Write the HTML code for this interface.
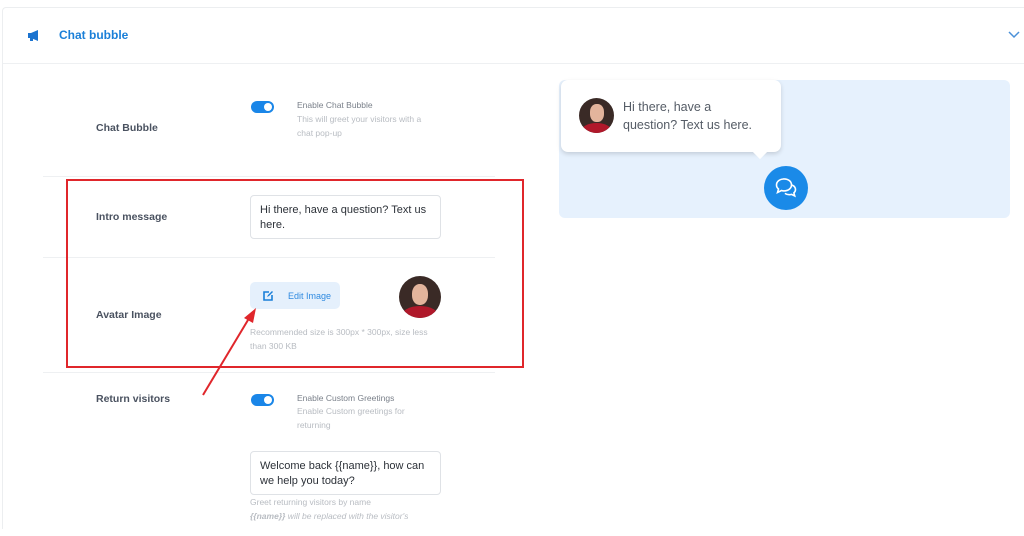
<!DOCTYPE html>
<html style="overflow:hidden;height:536px"><head><meta charset="utf-8"><style>
html,body{margin:0;width:1024px;height:536px;overflow:hidden}
body{background:#fff;font-family:"Liberation Sans",sans-serif;position:relative}
.a{position:absolute}
.lbl{font-size:10.5px;font-weight:bold;color:#4a5260}
.sep{position:absolute;height:1px;background:#eef0f2}
.tog{position:absolute;width:23px;height:12px;border-radius:6px;background:#1a86e8}
.tog:after{content:"";position:absolute;right:2px;top:2px;width:8px;height:8px;border-radius:50%;background:#fff}
.t1{font-size:8.5px;color:#7a808a}
.t2{font-size:8.5px;color:#b8bcc2;line-height:14px}
.ta{position:absolute;border:1px solid #dfe2e6;border-radius:4px;background:#fff;font-size:11px;color:#2c3138;line-height:15px;padding:7px 9px;box-sizing:border-box}
.av{position:absolute;border-radius:50%;overflow:hidden;background:#3a2a26}
.av .f{position:absolute;left:30%;top:18%;width:40%;height:50%;border-radius:45%;background:#e3b49c}
.av .s{position:absolute;left:5%;top:72%;width:90%;height:50%;border-radius:50% 50% 0 0;background:#b0182a}
</style></head><body>
<div class="a" style="left:2px;top:7px;width:1021px;height:521px;border:1px solid #eceef0;border-bottom:none;border-right:none;border-radius:4px 0 0 0"></div>
<div class="sep" style="left:3px;top:63px;width:1021px"></div>
<svg class="a" style="left:27px;top:30px" width="13" height="11" viewBox="0 0 13 11"><path d="M1 3h3l7-3v11l-7-3H1z" fill="#1a73d0"/><rect x="3" y="7" width="3" height="4" fill="#1a73d0"/></svg>
<div class="a" style="left:59px;top:28px;font-size:12px;font-weight:bold;color:#1a7fd8">Chat bubble</div>
<svg class="a" style="left:1008px;top:31px" width="12" height="8" viewBox="0 0 12 8"><path d="M1 1l5 5 5-5" stroke="#4a90d8" stroke-width="1.5" fill="none"/></svg>

<div class="a lbl" style="left:96px;top:122px">Chat Bubble</div>
<div class="tog" style="left:251px;top:101px"></div>
<div class="a t1" style="left:297px;top:100px">Enable Chat Bubble</div>
<div class="a t2" style="left:297px;top:112px">This will greet your visitors with a<br>chat pop-up</div>
<div class="sep" style="left:43px;top:176px;width:452px"></div>

<div class="a lbl" style="left:96px;top:211px">Intro message</div>
<div class="ta" style="left:250px;top:195px;width:191px;height:44px">Hi there, have a question? Text us here.</div>
<div class="sep" style="left:43px;top:257px;width:452px"></div>

<div class="a lbl" style="left:96px;top:309px">Avatar Image</div>
<div class="a" style="left:250px;top:282px;width:90px;height:27px;border-radius:5px;background:#e5f0fc"></div>
<svg class="a" style="left:263px;top:290px" width="11" height="11" viewBox="0 0 11 11"><path d="M6 2H1v8h8V5" stroke="#1a7fd8" stroke-width="1.6" fill="none"/><path d="M4 7l1-2 4-4 1 1-4 4z" fill="#1a7fd8"/></svg>
<div class="a" style="left:288px;top:291px;font-size:9px;color:#2f8ae0">Edit Image</div>
<div class="av" style="left:399px;top:276px;width:42px;height:42px"><div class="f"></div><div class="s"></div></div>
<div class="a t2" style="left:250px;top:325px">Recommended size is 300px * 300px, size less<br>than 300 KB</div>
<div class="sep" style="left:43px;top:372px;width:452px"></div>

<div class="a" style="left:66px;top:179px;width:454px;height:185px;border:2px solid #e0262b"></div>
<svg class="a" style="left:195px;top:300px" width="70" height="100" viewBox="0 0 70 100"><path d="M8 95L56 15" stroke="#e0262b" stroke-width="2"/><path d="M61 8l-3 15-9-5z" fill="#e0262b"/></svg>

<div class="a lbl" style="left:96px;top:393px">Return visitors</div>
<div class="tog" style="left:251px;top:394px"></div>
<div class="a t1" style="left:297px;top:393px">Enable Custom Greetings</div>
<div class="a t2" style="left:297px;top:404px">Enable Custom greetings for<br>returning</div>
<div class="ta" style="left:250px;top:451px;width:191px;height:44px">Welcome back {{name}}, how can we help you today?</div>
<div class="a t2" style="left:250px;top:495px;height:33px;overflow:hidden">Greet returning visitors by name<br><i><b>{{name}}</b> will be replaced with the visitor's</i></div>

<div class="a" style="left:559px;top:80px;width:451px;height:138px;border-radius:6px;background:#e6f1fd"></div>
<div class="a" style="left:561px;top:80px;width:220px;height:72px;border-radius:7px;background:#fff;box-shadow:0 2px 5px rgba(0,0,0,.15)"></div>
<div class="a" style="left:755px;top:147px;width:10px;height:10px;background:#fff;transform:rotate(45deg)"></div>
<div class="av" style="left:579px;top:98px;width:35px;height:35px"><div class="f"></div><div class="s"></div></div>
<div class="a" style="left:623px;top:98px;font-size:12.5px;line-height:18px;color:#555c66">Hi there, have a<br>question? Text us here.</div>
<div class="a" style="left:764px;top:166px;width:44px;height:44px;border-radius:50%;background:#1a8ae8"></div>
<svg class="a" style="left:773px;top:175px" width="26" height="26" viewBox="0 0 26 26"><path d="M11 4c-4.5 0-7.5 2.7-7.5 6 0 1.6.7 3 2 4l-1 3.5 4-2c.8.3 1.6.4 2.5.4 4.5 0 7.5-2.7 7.5-6s-3-6-7.5-6z" stroke="#fff" stroke-width="1.6" fill="none"/><path d="M19 10c2 .9 3.5 2.6 3.5 4.6 0 1.3-.6 2.4-1.6 3.3l.8 3-3.2-1.5c-.7.2-1.5.3-2.3.3-1.7 0-3.2-.5-4.3-1.3" stroke="#fff" stroke-width="1.6" fill="none"/></svg>
</body></html>
